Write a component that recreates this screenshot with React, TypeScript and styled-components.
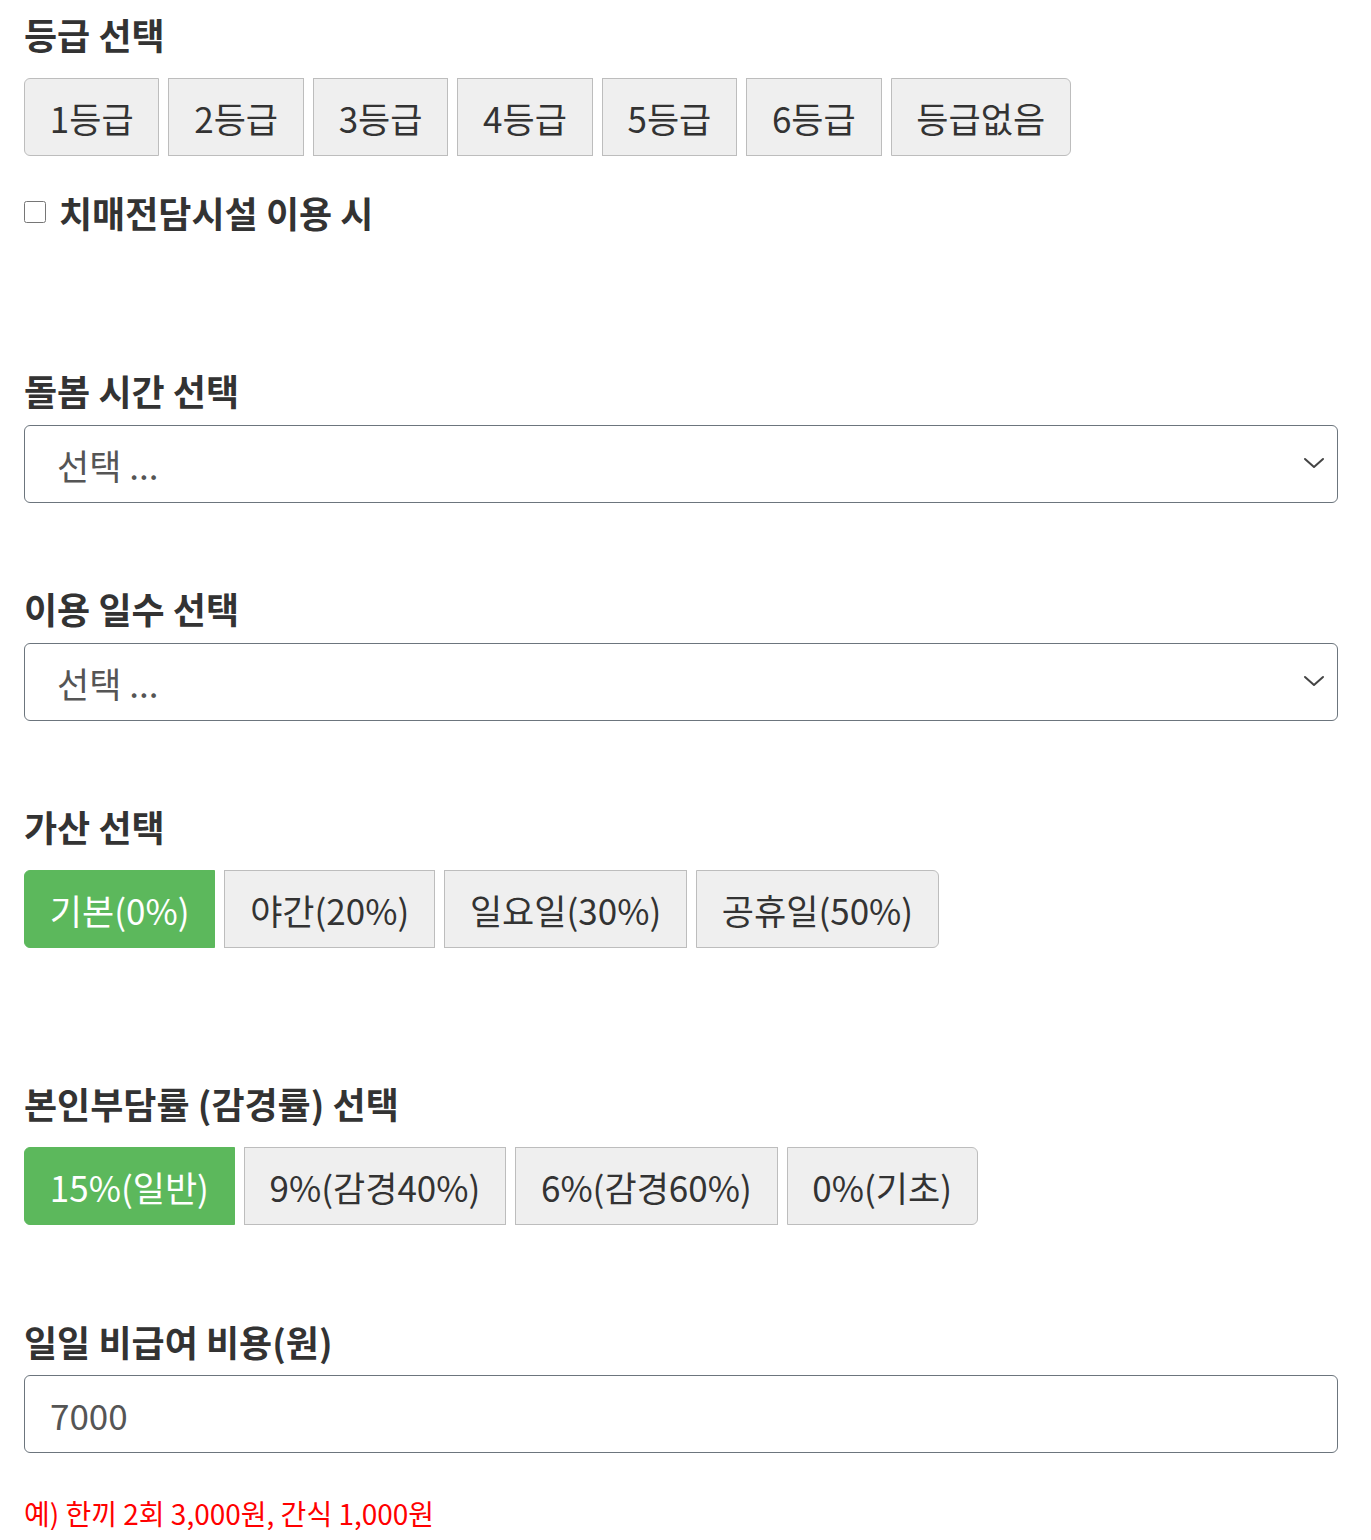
import React, { useState } from "react";
import styled, { createGlobalStyle, css } from "styled-components";

const Global = createGlobalStyle`
  html, body { margin: 0; padding: 0; background: #fff; }
  body { font-family: "Noto Sans CJK KR", "Noto Sans", sans-serif; color: #333; }
  * { box-sizing: border-box; }
`;

const Page = styled.div`
  padding: 15px 33px 0 24px;
  width: 1371px;
`;

const Heading = styled.h3<{ $mb?: number; $mt?: number }>`
  margin: ${(p) => p.$mt ?? 0}px 0 ${(p) => p.$mb ?? 16}px;
  font-size: 36px;
  line-height: 38px;
  font-weight: 700;
  color: #333;
`;

const ButtonRow = styled.div`
  display: flex;
  gap: 9px;
`;

const OptButton = styled.button<{ $active?: boolean; $pos: "first" | "mid" | "last" }>`
  height: 78px;
  padding: 0 24.8px;
  font-family: inherit;
  font-size: 35px;
  line-height: 1;
  border: 1px solid #bdbdbd;
  background: #efefef;
  color: #333;
  cursor: pointer;
  border-radius: ${(p) =>
    p.$pos === "first" ? "6px 0 0 6px" : p.$pos === "last" ? "0 6px 6px 0" : "0"};
  ${(p) =>
    p.$active &&
    css`
      background: #5cb85c;
      border-color: #5cb85c;
      color: #fff;
    `}
`;

const CheckRow = styled.label`
  display: flex;
  align-items: center;
  gap: 13px;
  margin-top: 37px;
  height: 38px;
  font-size: 36px;
  font-weight: 700;
  color: #333;
`;

const Check = styled.input`
  width: 22px;
  height: 22px;
  margin: 0;
`;

const SelectWrap = styled.div`
  position: relative;
`;

const Select = styled.select`
  appearance: none;
  width: 100%;
  height: 78px;
  padding: 0 60px 0 32px;
  font-family: inherit;
  font-size: 35px;
  color: #555;
  background: #fff;
  border: 1px solid #6c757d;
  border-radius: 6px;
`;

const Chevron = styled.svg`
  position: absolute;
  right: 12px;
  top: 50%;
  transform: translateY(-50%);
  pointer-events: none;
`;

const Input = styled.input`
  width: 100%;
  height: 78px;
  padding: 0 25px;
  font-family: inherit;
  font-size: 35px;
  color: #555;
  border: 1px solid #6c757d;
  border-radius: 6px;
  background: #fff;
`;

const Note = styled.p`
  margin: 43px 0 0;
  font-size: 28px;
  line-height: 34px;
  color: #ff0000;
`;

function Group({ items, active, onPick }: { items: string[]; active: number; onPick: (i: number) => void }) {
  return (
    <ButtonRow>
      {items.map((t, i) => (
        <OptButton
          key={t}
          $active={i === active}
          $pos={i === 0 ? "first" : i === items.length - 1 ? "last" : "mid"}
          onClick={() => onPick(i)}
        >
          {t}
        </OptButton>
      ))}
    </ButtonRow>
  );
}

function ChevronSelect() {
  return (
    <SelectWrap>
      <Select defaultValue="">
        <option value="">선택 ...</option>
      </Select>
      <Chevron width="24" height="24" viewBox="0 0 24 24" fill="none">
        <path d="M3 7l9 8 9-8" stroke="#444" strokeWidth="2" strokeLinecap="round" strokeLinejoin="round" />
      </Chevron>
    </SelectWrap>
  );
}

export default function App() {
  const [grade, setGrade] = useState(-1);
  const [extra, setExtra] = useState(0);
  const [rate, setRate] = useState(0);
  return (
    <Page>
      <Global />
      <Heading $mb={25}>등급 선택</Heading>
      <Group
        items={["1등급", "2등급", "3등급", "4등급", "5등급", "6등급", "등급없음"]}
        active={grade}
        onPick={setGrade}
      />
      <CheckRow>
        <Check type="checkbox" />
        치매전담시설 이용 시
      </CheckRow>

      <Heading $mt={140} $mb={16}>돌봄 시간 선택</Heading>
      <ChevronSelect />

      <Heading $mt={86} $mb={16}>이용 일수 선택</Heading>
      <ChevronSelect />

      <Heading $mt={86} $mb={25}>가산 선택</Heading>
      <Group items={["기본(0%)", "야간(20%)", "일요일(30%)", "공휴일(50%)"]} active={extra} onPick={setExtra} />

      <Heading $mt={136} $mb={25}>본인부담률 (감경률) 선택</Heading>
      <Group items={["15%(일반)", "9%(감경40%)", "6%(감경60%)", "0%(기초)"]} active={rate} onPick={setRate} />

      <Heading $mt={97} $mb={15}>일일 비급여 비용(원)</Heading>
      <Input defaultValue="7000" />
      <Note>예) 한끼 2회 3,000원, 간식 1,000원</Note>
    </Page>
  );
}
